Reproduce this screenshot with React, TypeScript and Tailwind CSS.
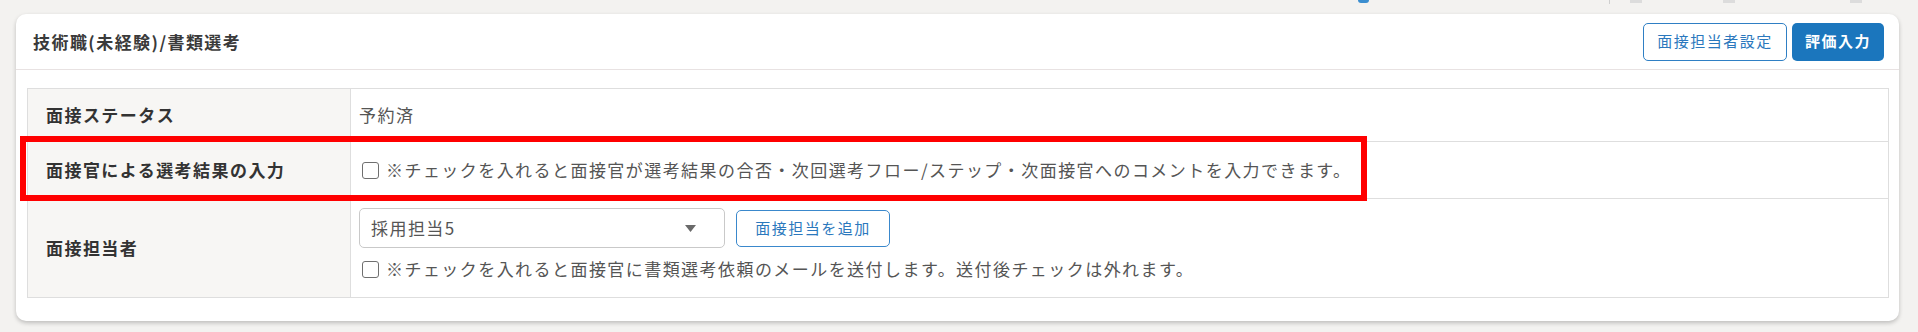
import React from "react";

const Checkbox = () => (
  <span className="inline-block w-[17px] h-[17px] shrink-0 rounded-[3px] border-[1.5px] border-[#6f6f6f] bg-white" />
);

export default function App() {
  return (
    <div className="relative w-[1918px] h-[332px] overflow-hidden bg-[#f3f2f0] font-['Noto_Sans_CJK_JP','Noto_Sans',sans-serif] text-[#555]">
      {/* top remnants */}
      <div className="flex h-[14px] items-start">
        <div className="ml-[1358px] h-[3px] w-[11px] rounded-b-full bg-[#3b8ed0]" />
        <div className="ml-[240px] h-[4px] w-[1px] bg-[#cfcfcf]" />
        <div className="ml-[20px] h-[3px] w-[12px] bg-[#dcdcdc]" />
        <div className="ml-[81px] h-[3px] w-[12px] bg-[#dcdcdc]" />
        <div className="ml-[115px] h-[3px] w-[12px] bg-[#dcdcdc]" />
      </div>

      {/* card */}
      <div className="ml-[16px] w-[1883px] h-[307px] rounded-[10px] bg-white shadow-[0_2px_4px_rgba(0,0,0,0.22)]">
        <div className="flex h-[56px] items-center justify-between border-b border-[#e8e2e2] pl-[17px] pr-[15px]">
          <div className="text-[17px] font-semibold tracking-[0.085em] text-[#3a3a3a]">技術職(未経験)/書類選考</div>
          <div className="flex items-center gap-[5px]">
            <button className="h-[38px] w-[144px] rounded-[5px] border border-[#2f7fc4] bg-white text-[15px] tracking-[0.1em] text-[#2b78bd]">
              面接担当者設定
            </button>
            <button className="h-[38px] w-[92px] rounded-[5px] bg-[#1b76bd] text-[15px] font-bold tracking-[0.1em] text-white">
              評価入力
            </button>
          </div>
        </div>

        <div className="pl-[11px] pr-[10px] pt-[18px]">
          <div className="border-l border-r border-t border-[#dedede] text-[17px] tracking-[0.085em]">
            {/* row 1 */}
            <div className="flex h-[53px] border-b border-[#dedede]">
              <div className="flex w-[323px] shrink-0 items-center border-r border-[#dedede] bg-[#f7f6f4] pl-[18px] font-bold text-[#333]">
                面接ステータス
              </div>
              <div className="flex items-center pl-[8px] text-[#555]">予約済</div>
            </div>
            {/* row 2 */}
            <div className="flex h-[57px] border-b border-[#dedede]">
              <div className="flex w-[323px] shrink-0 items-center border-r border-[#dedede] bg-[#f7f6f4] pl-[18px] font-bold text-[#333]">
                面接官による選考結果の入力
              </div>
              <div className="flex items-center gap-[7px] pl-[11px] text-[#555]">
                <Checkbox />
                <span>※チェックを入れると面接官が選考結果の合否・次回選考フロー/ステップ・次面接官へのコメントを入力できます。</span>
              </div>
            </div>
            {/* row 3 */}
            <div className="flex h-[99px] border-b border-[#dedede]">
              <div className="flex w-[323px] shrink-0 items-center border-r border-[#dedede] bg-[#f7f6f4] pl-[18px] font-bold text-[#333]">
                面接担当者
              </div>
              <div className="flex flex-col pl-[8px] pt-[9px]">
                <div className="flex items-center gap-[11px]">
                  <div className="flex h-[40px] w-[366px] items-center justify-between rounded-[5px] border border-[#c9c9c9] bg-white pl-[11px] pr-[28px] text-[#555]">
                    <span>採用担当5</span>
                    <svg width="11" height="7" viewBox="0 0 11 7" className="shrink-0">
                      <path d="M0 0 L11 0 L5.5 7 Z" fill="#6a6a6a" />
                    </svg>
                  </div>
                  <button className="h-[37px] w-[154px] rounded-[5px] border border-[#3a88cc] bg-white text-[15px] tracking-[0.1em] text-[#2b78bd]">
                    面接担当を追加
                  </button>
                </div>
                <div className="mt-[9px] flex h-[24px] items-center gap-[7px] pl-[3px] leading-[24px] text-[#555]">
                  <Checkbox />
                  <span>※チェックを入れると面接官に書類選考依頼のメールを送付します。送付後チェックは外れます。</span>
                </div>
              </div>
            </div>
          </div>
        </div>
      </div>

      {/* red annotation box */}
      <div className="absolute left-[20px] top-[136px] h-[65px] w-[1347px] border-[6px] border-[#ff0000]" />
    </div>
  );
}
